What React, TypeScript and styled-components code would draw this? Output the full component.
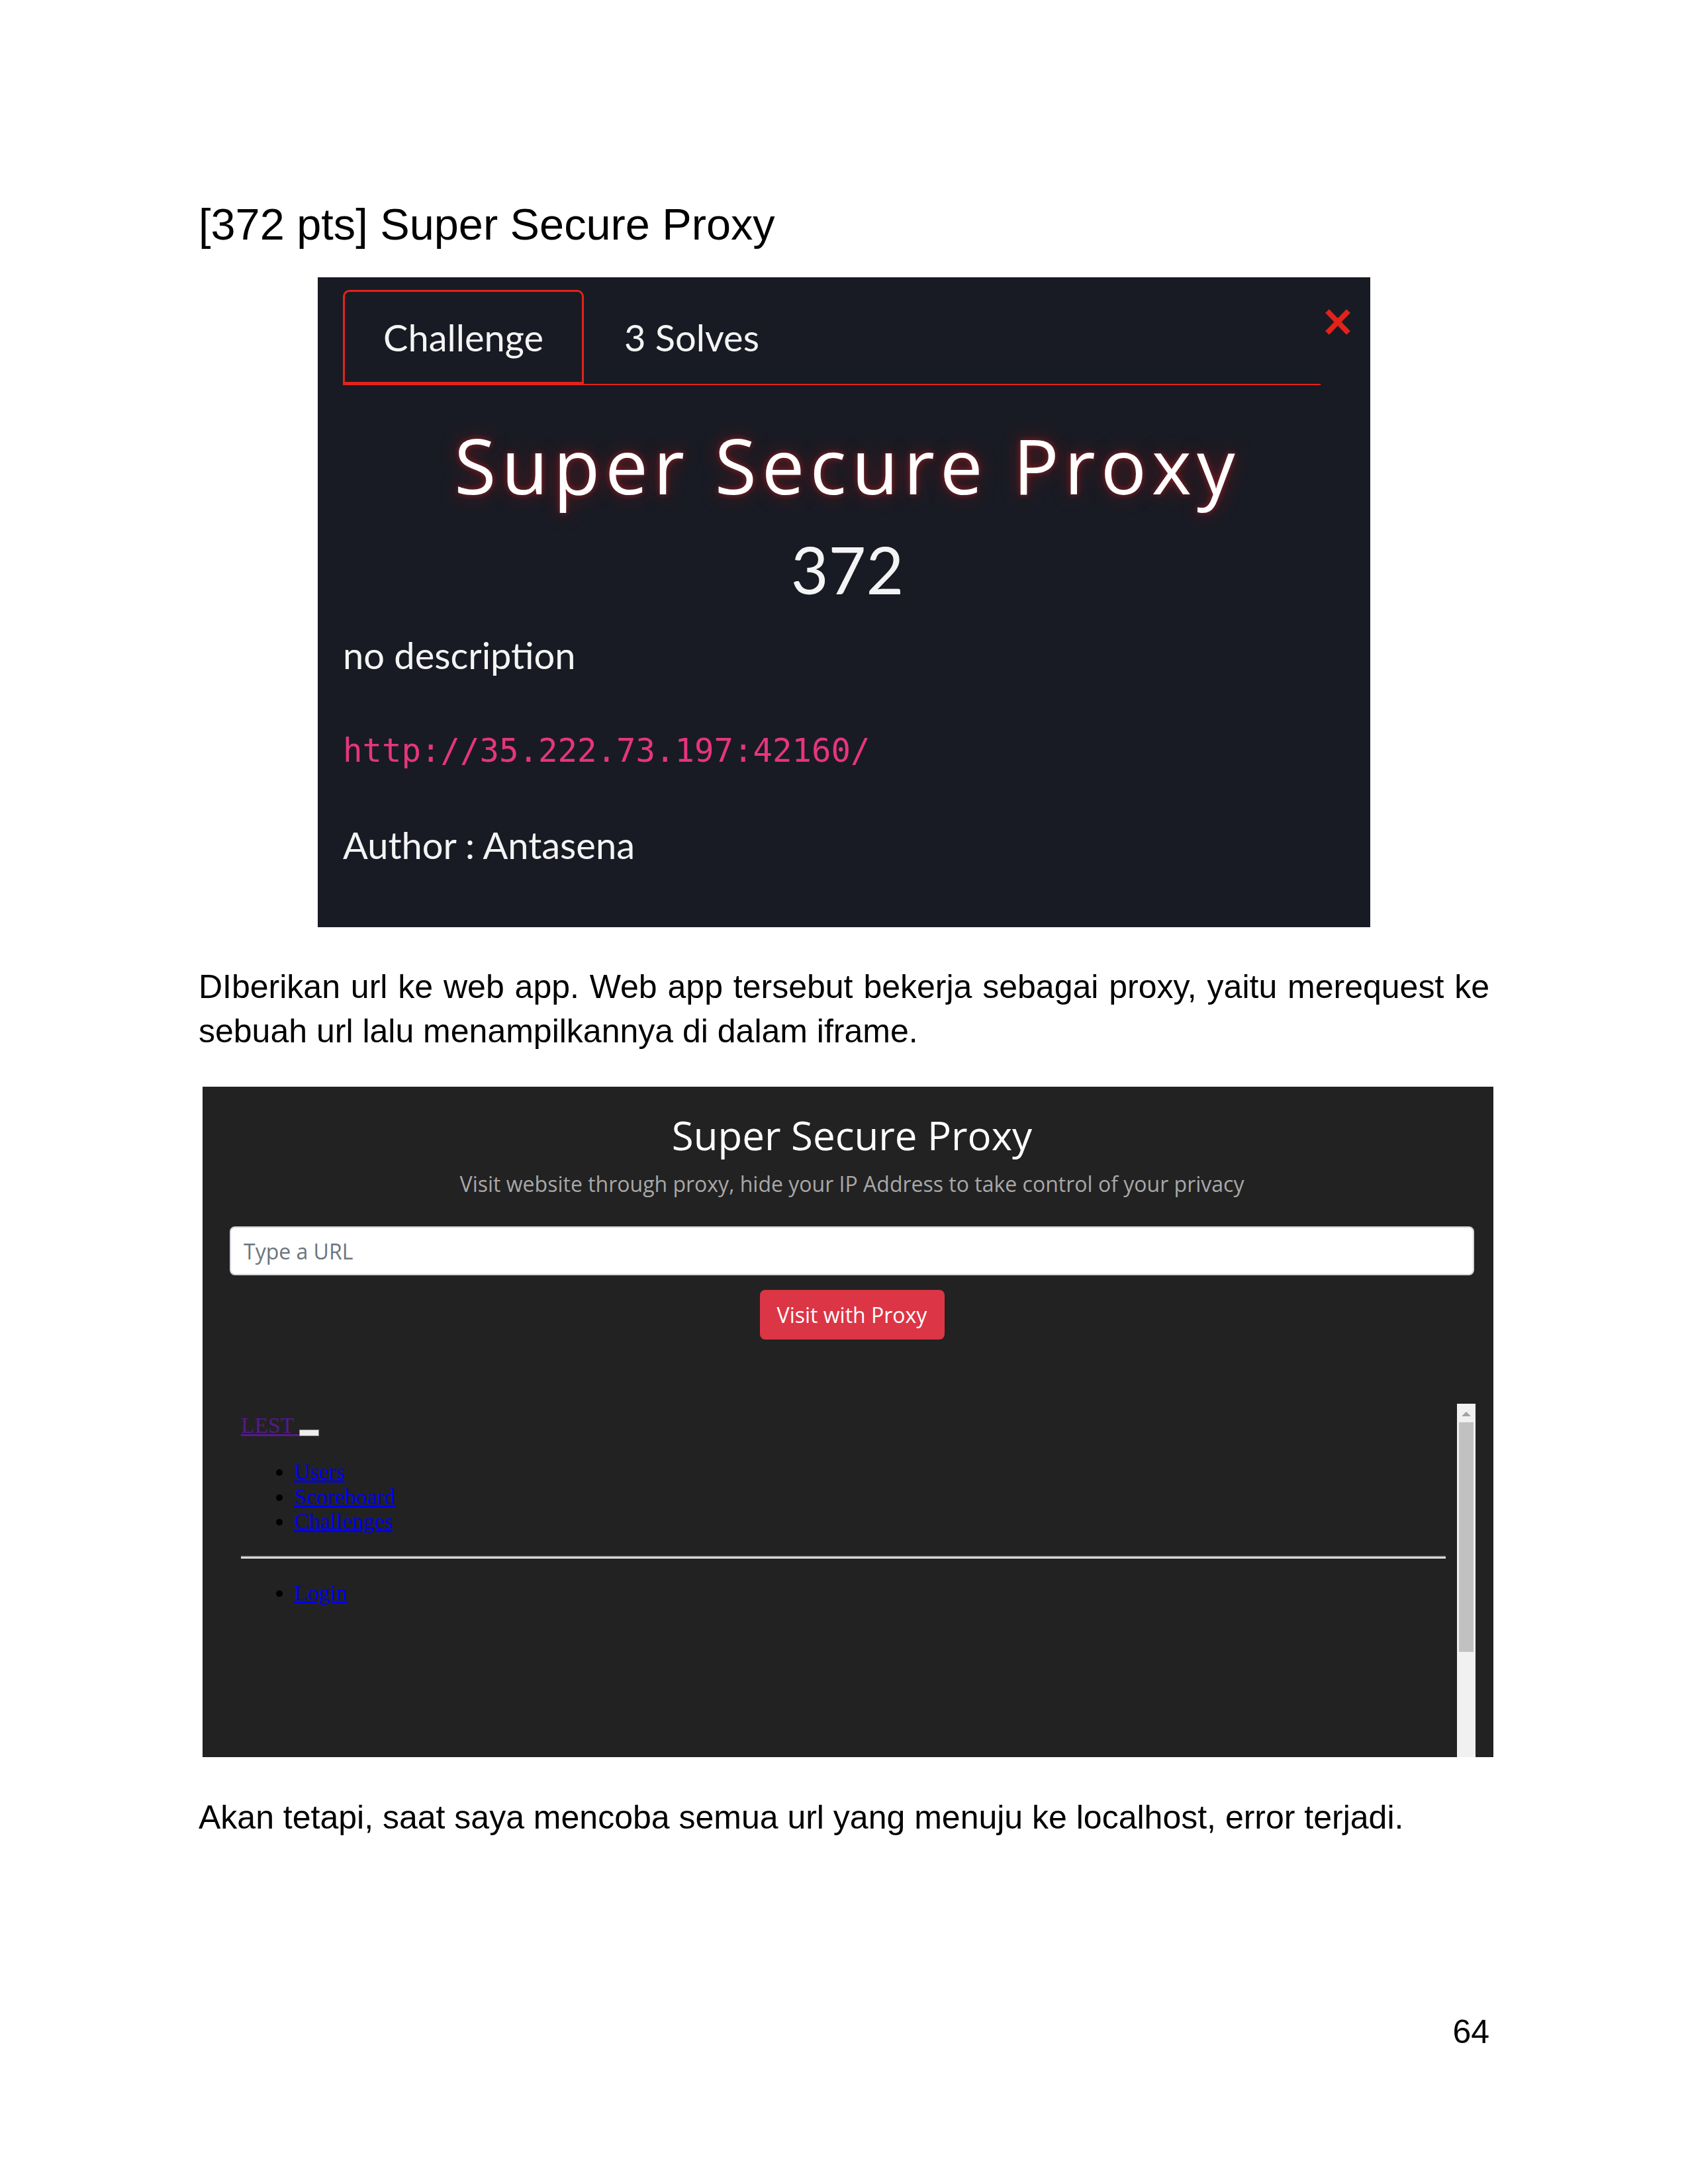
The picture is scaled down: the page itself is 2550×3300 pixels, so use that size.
import React from 'react'
import styled, { createGlobalStyle } from 'styled-components'

const GlobalStyle = createGlobalStyle`
  html, body {
    margin: 0;
    padding: 0;
    background: #ffffff;
  }
  body {
    width: 2550px;
    min-height: 3300px;
  }
`

const Page = styled.div`
  box-sizing: border-box;
  width: 2550px;
  min-height: 3300px;
  padding: 302px 300px 0 300px;
  font-family: 'Liberation Sans', Arial, sans-serif;
  color: #000000;
`

const Heading = styled.h2`
  margin: 0;
  font-size: 66.67px;
  font-weight: 400;
  line-height: 75px;
`

const Paragraph = styled.p<{ $top: number }>`
  margin: ${(p) => p.$top}px 0 0;
  font-size: 50px;
  line-height: 67px;
  text-align: justify;
`

const PageNumber = styled.div`
  margin-top: 257px;
  text-align: right;
  font-size: 50px;
  line-height: 67px;
`

/* ---------- challenge modal screenshot ---------- */

const ChallengeShot = styled.section`
  box-sizing: border-box;
  width: 1590px;
  height: 982px;
  margin: 42px 0 0 180px;
  padding: 19px 28px 0 38px;
  background: #191b24;
  color: #f4f4f4;
  font-family: Lato, 'Open Sans', sans-serif;
`

const TabBar = styled.div`
  display: flex;
  align-items: flex-start;
`

const Tabs = styled.nav`
  flex: 1;
  display: flex;
  border-bottom: 2px solid #e2231a;
`

const Tab = styled.div<{ $active?: boolean }>`
  box-sizing: border-box;
  padding: 27px 58px 25px;
  margin-bottom: -2px;
  border: 3px solid ${(p) => (p.$active ? '#e2231a' : 'transparent')};
  border-bottom-width: 5px;
  border-radius: 10px 10px 0 0;
  font-size: 56px;
  line-height: 84px;
  white-space: nowrap;
`

const CloseButton = styled.button`
  display: block;
  width: 42px;
  height: 43px;
  margin: 27px 0 0 5px;
  padding: 0;
  border: 0;
  background: none;
`

const ChallengeTitle = styled.h1`
  margin: 52px 0 0;
  text-align: center;
  font-family: 'Open Sans', sans-serif;
  font-size: 115px;
  font-weight: 400;
  letter-spacing: 8px;
  line-height: 138px;
  color: #ffffff;
  text-shadow: 0 0 8px rgba(230, 40, 40, 0.5), 0 0 26px rgba(170, 20, 20, 0.55);
`

const Points = styled.div`
  margin-top: 29px;
  text-align: center;
  font-size: 98px;
  line-height: 118px;
`

const InfoLine = styled.div<{ $top: number }>`
  margin-top: ${(p) => p.$top}px;
  font-size: 56px;
  line-height: 67px;
`

const ChallengeUrl = styled.code`
  display: block;
  margin-top: 82px;
  font-family: 'DejaVu Sans Mono', 'Liberation Mono', monospace;
  font-size: 49px;
  line-height: 60px;
  color: #e6357f;
`

/* ---------- proxy web app screenshot ---------- */

const ProxyShot = styled.section`
  box-sizing: border-box;
  width: 1950px;
  height: 1013px;
  margin: 50px 0 0 6px;
  padding: 37px 29px 0 41px;
  background: #222222;
  overflow: hidden;
  display: flex;
  flex-direction: column;
  align-items: center;
  font-family: 'Open Sans', sans-serif;

  & > * {
    flex-shrink: 0;
  }
`

const ProxyTitle = styled.h1`
  margin: 0;
  font-size: 60px;
  font-weight: 400;
  line-height: 72px;
  color: #ffffff;
`

const ProxySubtitle = styled.p`
  margin: 19px 0 0;
  font-size: 32px;
  line-height: 38px;
  color: #a8a8a8;
`

const UrlInput = styled.input`
  box-sizing: border-box;
  width: 100%;
  height: 74px;
  margin-top: 45px;
  padding: 0 19px;
  border: 2px solid #ced4da;
  border-radius: 8px;
  background: #ffffff;
  font-family: 'Open Sans', sans-serif;
  font-size: 32px;
  color: #495057;

  &::placeholder {
    color: #6c757d;
  }
`

const VisitButton = styled.button`
  width: 279px;
  height: 75px;
  margin-top: 22px;
  border: 0;
  border-radius: 8px;
  background: #dc3545;
  color: #ffffff;
  font-family: 'Open Sans', sans-serif;
  font-size: 32px;
`

const Frame = styled.div`
  align-self: flex-start;
  display: flex;
  width: 1882px;
  height: 560px;
  margin-top: 97px;
  font-family: 'Liberation Serif', 'Times New Roman', serif;
  font-size: 33.6px;
  line-height: 37px;
  color: #000000;
`

const FrameBody = styled.div`
  flex: 1;
  padding: 14px 17px 0;
`

const Brand = styled.a`
  color: #551a8b;
  text-decoration: underline;
`

const BrokenLogo = styled.span`
  display: inline-block;
  box-sizing: border-box;
  width: 30px;
  height: 10px;
  vertical-align: -5px;
  background: #eeeeee;
  border: 1px solid #8a8a8a;
`

const NavList = styled.ul`
  margin: 33px 0 0;
  padding-left: 80px;
  list-style: disc;

  li {
    line-height: 37.5px;
  }

  a {
    color: #0000ee;
    text-decoration: underline;
  }
`

const Rule = styled.hr`
  height: 0;
  margin: 33px 0 0;
  border: 0;
  border-top: 2px solid #9a9a9a;
  border-bottom: 2px solid #eeeeee;
`

const Scrollbar = styled.div`
  width: 28px;
  background: #f1f1f1;
  display: flex;
  flex-direction: column;
  align-items: center;
`

const ScrollArrow = styled.svg`
  display: block;
  margin-top: 12px;
`

const ScrollThumb = styled.div`
  width: 22px;
  height: 347px;
  margin-top: 9px;
  background: #c1c1c1;
`

export default function App() {
  return (
    <Page>
      <GlobalStyle />
      <Heading>[372 pts] Super Secure Proxy</Heading>

      <ChallengeShot>
        <TabBar>
          <Tabs>
            <Tab $active>Challenge</Tab>
            <Tab>3 Solves</Tab>
          </Tabs>
          <CloseButton aria-label="Close">
            <svg width="42" height="43" viewBox="0 0 42 43">
              <path d="M5 5 L37 38 M37 5 L5 38" stroke="#e2231a" strokeWidth="8" fill="none" />
            </svg>
          </CloseButton>
        </TabBar>
        <ChallengeTitle>Super Secure Proxy</ChallengeTitle>
        <Points>372</Points>
        <InfoLine $top={37}>no description</InfoLine>
        <ChallengeUrl>http://35.222.73.197:42160/</ChallengeUrl>
        <InfoLine $top={78}>Author : Antasena</InfoLine>
      </ChallengeShot>

      <Paragraph $top={57}>
        DIberikan url ke web app. Web app tersebut bekerja sebagai proxy, yaitu merequest ke
        sebuah url lalu menampilkannya di dalam iframe.
      </Paragraph>

      <ProxyShot>
        <ProxyTitle>Super Secure Proxy</ProxyTitle>
        <ProxySubtitle>
          Visit website through proxy, hide your IP Address to take control of your privacy
        </ProxySubtitle>
        <UrlInput placeholder="Type a URL" readOnly />
        <VisitButton>Visit with Proxy</VisitButton>
        <Frame>
          <FrameBody>
            <div>
              <Brand href="#">LEST </Brand>
              <BrokenLogo />
            </div>
            <NavList>
              <li>
                <a href="#">Users</a>
              </li>
              <li>
                <a href="#">Scoreboard</a>
              </li>
              <li>
                <a href="#">Challenges</a>
              </li>
            </NavList>
            <Rule />
            <NavList>
              <li>
                <a href="#">Login</a>
              </li>
            </NavList>
          </FrameBody>
          <Scrollbar>
            <ScrollArrow width="14" height="7" viewBox="0 0 14 7">
              <path d="M7 0 L14 7 L0 7 Z" fill="#a3a3a3" />
            </ScrollArrow>
            <ScrollThumb />
          </Scrollbar>
        </Frame>
      </ProxyShot>

      <Paragraph $top={58}>
        Akan tetapi, saat saya mencoba semua url yang menuju ke localhost, error terjadi.
      </Paragraph>

      <PageNumber>64</PageNumber>
    </Page>
  )
}
